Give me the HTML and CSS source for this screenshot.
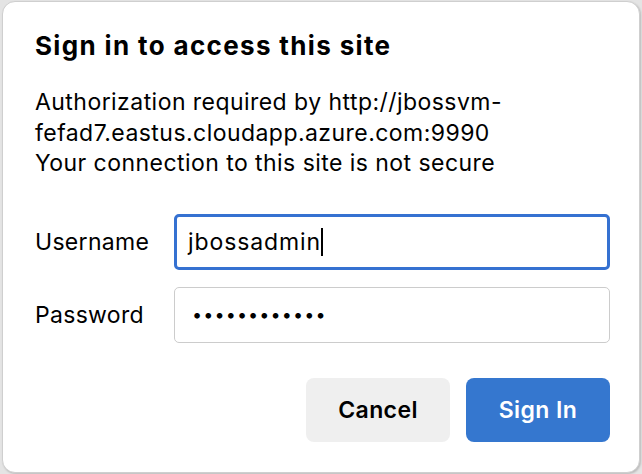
FILE: index.html
```html
<!DOCTYPE html>
<html lang="en">
<head>
<meta charset="utf-8">
<title>Sign in to access this site</title>
<link rel="stylesheet" href="styles.css">
</head>
<body>
<div class="dialog">
  <h1 class="title">Sign in to access this site</h1>
  <p class="message">Authorization required by http://jbossvm-<br>fefad7.eastus.cloudapp.azure.com:9990<br>Your connection to this site is not secure</p>
  <div class="form">
    <div class="label">Username</div>
    <div class="field focused"><span class="value">jbossadmin</span><span class="caret"></span></div>
    <div class="label">Password</div>
    <div class="field"><span class="dots">••••••••••••</span></div>
  </div>
  <div class="actions">
    <div class="btn cancel">Cancel</div>
    <div class="btn primary">Sign In</div>
  </div>
</div>
</body>
</html>
```
FILE: styles.css
```css
html, body {
  margin: 0;
  padding: 0;
}
body {
  background: #e4e4e4;
  width: 642px;
  height: 474px;
  overflow: hidden;
  font-family: Inter, "Noto Sans", sans-serif;
  color: #000;
}
.dialog {
  box-sizing: border-box;
  margin: 1px 0 0 2px;
  width: 638px;
  height: 472px;
  background: #fff;
  border: 1px solid #cfcfcf;
  border-radius: 13px;
  box-shadow: 1px 1px 2px rgba(0,0,0,0.18);
  padding: 29px 29px 0 32px;
}
.title {
  margin: 0;
  font-size: 26px;
  line-height: 30px;
  font-weight: 700;
  letter-spacing: 1.35px;
}
.message {
  margin: 26px 0 0 0;
  font-size: 23px;
  line-height: 30.5px;
  font-weight: 400;
  letter-spacing: 0.45px;
}
.form {
  margin-top: 35px;
  display: grid;
  grid-template-columns: 139px 1fr;
  row-gap: 17px;
  align-items: center;
}
.label {
  font-size: 23px;
  line-height: 28px;
  letter-spacing: 0.3px;
}
.field {
  box-sizing: border-box;
  height: 56px;
  border: 1px solid #cccccc;
  border-radius: 5px;
  display: flex;
  align-items: center;
  padding-left: 17px;
  font-size: 23px;
  letter-spacing: 0.9px;
}
.field.focused {
  border: 3px solid #3571d1;
  padding-left: 11px;
}
.caret {
  display: inline-block;
  width: 2px;
  height: 28px;
  background: #000;
  margin-left: 0;
}
.dots {
  font-size: 18px;
  letter-spacing: 1.1px;
}
.actions {
  margin-top: 35px;
  display: flex;
  justify-content: flex-end;
  gap: 16px;
}
.btn {
  box-sizing: border-box;
  width: 144px;
  height: 64px;
  border-radius: 8px;
  display: flex;
  align-items: center;
  justify-content: center;
  font-size: 23px;
  font-weight: 600;
  letter-spacing: 0.4px;
}
.cancel {
  background: #efefef;
  color: #000;
}
.primary {
  background: #3577cf;
  color: #fff;
}
```
